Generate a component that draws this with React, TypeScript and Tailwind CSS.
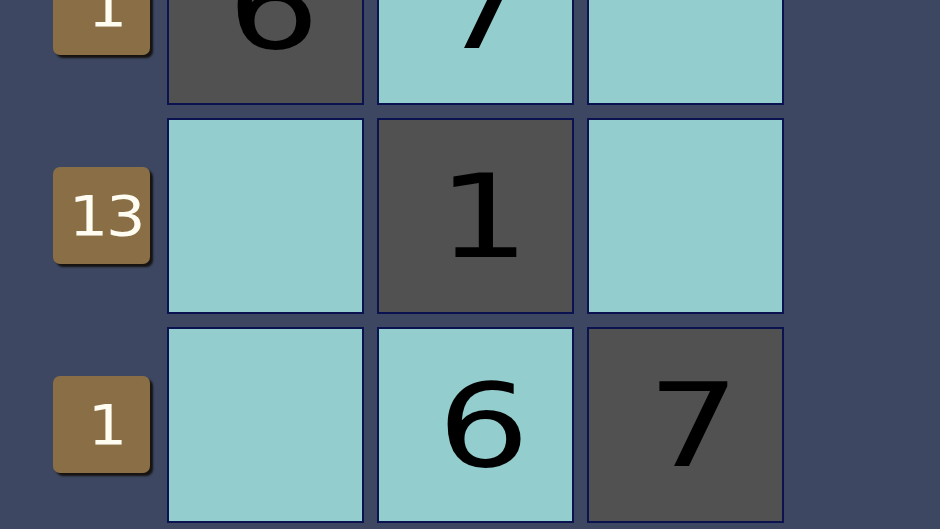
import React from 'react';

type Cell = { dark: boolean; value?: number };

const rows: { clue: number; cells: Cell[] }[] = [
  { clue: 1, cells: [{ dark: true, value: 6 }, { dark: false, value: 7 }, { dark: false }] },
  { clue: 13, cells: [{ dark: false }, { dark: true, value: 1 }, { dark: false }] },
  { clue: 1, cells: [{ dark: false }, { dark: false, value: 6 }, { dark: true, value: 7 }] },
];

const font = { fontFamily: '"DejaVu Sans", Verdana, sans-serif' };

export default function App() {
  return (
    <div className="w-[940px] h-[529px] overflow-hidden bg-[#3d4761]" style={font}>
      <div className="flex flex-col gap-[13px] mt-[-91px] pl-[53px]">
        {rows.map((row, i) => (
          <div key={i} className="flex items-center gap-[17px]">
            <div className="w-[97px] h-[97px] rounded-[7px] bg-[#8a6f46] shadow-[3px_3px_2px_rgba(15,10,3,0.85)] flex items-center justify-center pl-[9px] mt-[-2px]">
              <span className="text-[55px] leading-none text-[#fffdf2] scale-x-[1.13] inline-block tracking-[-2px] mt-[2px]">
                {row.clue}
              </span>
            </div>
            <div className="flex gap-[13px]">
              {row.cells.map((c, j) => (
                <div
                  key={j}
                  className={`w-[197px] h-[196px] border-2 border-[#0b1250] flex items-center justify-center pl-[16px] ${
                    c.dark ? 'bg-[#515151]' : 'bg-[#93cdce]'
                  }`}
                >
                  {c.value !== undefined && (
                    <span className="text-[115px] leading-none text-black scale-x-[1.26] inline-block mt-[2px]">
                      {c.value}
                    </span>
                  )}
                </div>
              ))}
            </div>
          </div>
        ))}
      </div>
    </div>
  );
}
